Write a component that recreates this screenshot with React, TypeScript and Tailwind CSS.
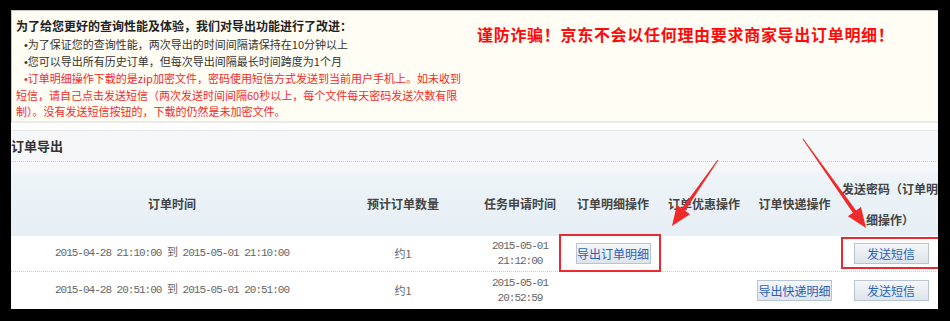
const cols = 'grid grid-cols-[322px_140px_94px_92px_90px_91px_100px] w-max'

function arrow(sx: number, sy: number, tx: number, ty: number) {
  const len = Math.hypot(tx - sx, ty - sy)
  const dx = (tx - sx) / len
  const dy = (ty - sy) / len
  const nx = -dy
  const ny = dx
  const bx = tx - dx * 20
  const by = ty - dy * 20
  const p = (x: number, y: number) => `${x.toFixed(1)},${y.toFixed(1)}`
  return [
    p(sx + nx * 0.5, sy + ny * 0.5),
    p(bx + nx * 2, by + ny * 2),
    p(bx + nx * 8, by + ny * 8),
    p(tx, ty),
    p(bx - nx * 8, by - ny * 8),
    p(bx - nx * 2, by - ny * 2),
    p(sx - nx * 0.5, sy - ny * 0.5),
  ].join(' ')
}

function Btn({ children }: { children: string }) {
  return (
    <button className="w-[75px] h-[21px] border border-[#b7c5d3] bg-gradient-to-b from-[#f5f7f9] to-[#dde4ea] text-[12px] leading-[19px] text-[#2a62b8]">
      {children}
    </button>
  )
}

const Dot = () => <span className="font-['Liberation_Sans',sans-serif]">•</span>

const rows = [
  { range: '2015-04-28 21:10:00 到 2015-05-01 21:10:00', date: '2015-05-01', time: '21:12:00', detail: true, express: false },
  { range: '2015-04-28 20:51:00 到 2015-05-01 20:51:00', date: '2015-05-01', time: '20:52:59', detail: false, express: true },
]

export default function App() {
  return (
    <div className="relative w-[950px] h-[321px] bg-black pt-[10px] pl-[11px] overflow-hidden font-['Noto_Sans_CJK_SC',sans-serif]">
      <div className="relative w-[927px] h-[299px] bg-white overflow-hidden">
        {/* notice */}
        <div className="flex h-[113px] border-t border-l border-b-2 border-[#c4c4c4] border-b-[#ebebeb] bg-[#fffdf4]">
          <div className="w-[465px] pl-[4px] pt-[7px] text-[11px] leading-[16px]">
            <p className="text-[12px] font-bold text-[#222] mb-[2px]">为了给您更好的查询性能及体验，我们对导出功能进行了改进：</p>
            <p className="pl-[8px] text-[#333]"><Dot />为了保证您的查询性能，两次导出的时间间隔请保持在10分钟以上</p>
            <p className="pl-[8px] text-[#333]"><Dot />您可以导出所有历史订单，但每次导出间隔最长时间跨度为1个月</p>
            <p className="text-[#f42a2a] whitespace-nowrap">
              <span className="pl-[8px]"><Dot />订单明细操作下载的是zip加密文件，密码使用短信方式发送到当前用户手机上。如未收到</span>
              <br />
              短信，请自己点击发送短信（两次发送时间间隔60秒以上，每个文件每天密码发送次数有限
              <br />
              制）。没有发送短信按钮的，下载的仍然是未加密文件。
            </p>
          </div>
          <div className="pt-[12px] text-[16px] leading-[22px] tracking-[0.7px] font-bold text-[#ff0a0a] whitespace-nowrap">
            谨防诈骗！京东不会以任何理由要求商家导出订单明细！
          </div>
        </div>

        {/* section */}
        <div className="mt-[7px] border-t border-[#e6e6e6] bg-[#f6f7f9] pb-[10px]">
          <div className="h-[31px] flex items-center border-b border-dotted border-[#cfcfcf]">
            <span className="text-[13px] font-bold text-[#333]">订单导出</span>
          </div>
        </div>

        {/* table */}
        <div className={`${cols} h-[64px] bg-gradient-to-b from-[#eef4f8] to-[#e6eff5] text-[12px] font-bold text-[#444] items-center text-center`}>
          <div>订单时间</div>
          <div>预计订单数量</div>
          <div>任务申请时间</div>
          <div>订单明细操作</div>
          <div>订单优惠操作</div>
          <div>订单快递操作</div>
          <div className="leading-[31px] px-[2px]">发送密码（订单明细操作）</div>
        </div>
        {rows.map((r, i) => (
          <div
            key={i}
            className={`${cols} ${i === 0 ? 'h-[36px] border-b border-dotted border-[#d0d0d0]' : 'h-[37px]'} items-center text-center text-[#666]`}
          >
            <div className="font-['Liberation_Mono','Noto_Sans_CJK_SC',monospace] text-[11px] tracking-[-1px]">{r.range}</div>
            <div className="text-[11px]">约1</div>
            <div className="font-['Liberation_Mono',monospace] text-[11px] leading-[15px] tracking-[-1px]">
              {r.date}
              <br />
              {r.time}
            </div>
            <div className="flex justify-center">{r.detail && <Btn>导出订单明细</Btn>}</div>
            <div />
            <div className="flex justify-center">{r.express && <Btn>导出快递明细</Btn>}</div>
            <div className="flex justify-center pl-[2px]">
              <Btn>发送短信</Btn>
            </div>
          </div>
        ))}

        {/* annotation boxes */}
        <div className="absolute left-[548px] top-[224px] w-[102px] h-[38px] border-2 border-[#ea2a30]" />
        <div className="absolute left-[830px] top-[227px] w-[110px] h-[32px] border-2 border-[#ea2a30]" />
      </div>

      <svg className="absolute inset-0 pointer-events-none" width="950" height="321">
        <polygon points={arrow(718, 160, 672, 226)} fill="#ee2a2a" />
        <polygon points={arrow(803, 139, 866, 228)} fill="#ee2a2a" />
      </svg>
    </div>
  )
}
